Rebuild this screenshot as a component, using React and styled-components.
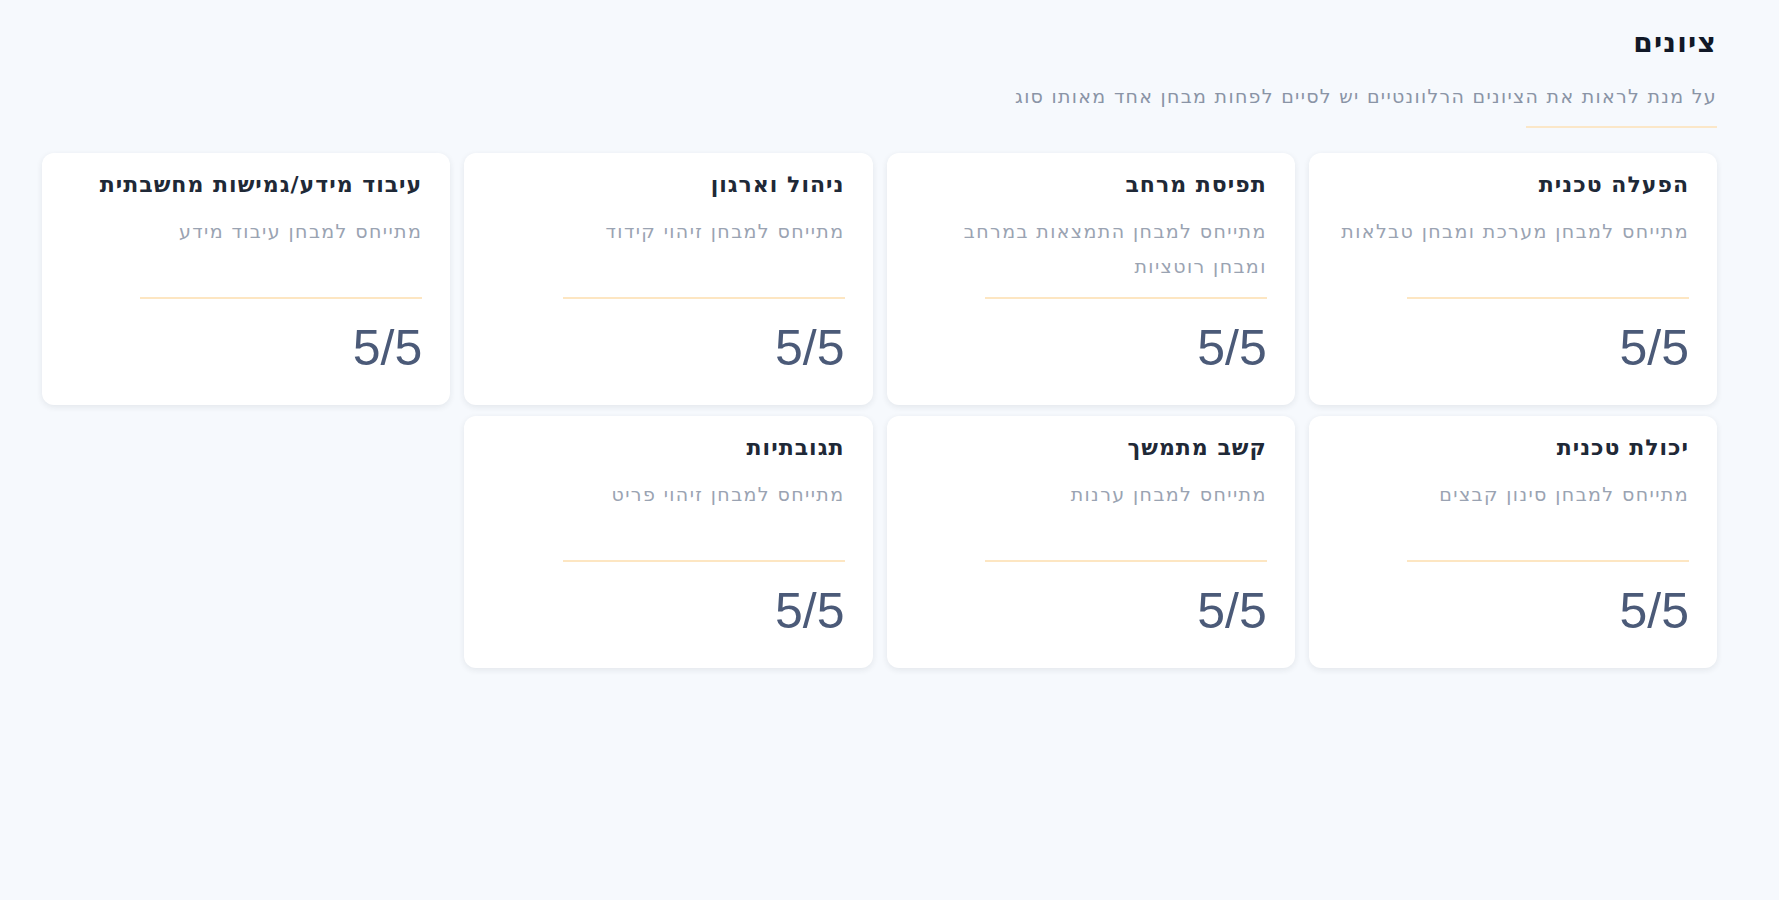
import React from 'react';
import styled, { createGlobalStyle } from 'styled-components';

const GlobalStyle = createGlobalStyle`
  html, body {
    margin: 0;
    padding: 0;
    background: #f6f9fd;
  }
  body {
    font-family: "DejaVu Sans", "Liberation Sans", Arial, sans-serif;
  }
`;

const Page = styled.div`
  direction: rtl;
  min-height: 900px;
  box-sizing: border-box;
  padding: 26px 62px 40px 42px;
  background: #f6f9fd;
`;

const Header = styled.header`
  display: flex;
  flex-direction: column;
  align-items: flex-start;
  margin-bottom: 25px;
`;

const Title = styled.h1`
  margin: 0;
  font-size: 28px;
  line-height: 34px;
  letter-spacing: 1.2px;
  font-weight: 700;
  color: #111827;
`;

const Subtitle = styled.p`
  margin: 23px 0 0;
  font-size: 19px;
  line-height: 26px;
  letter-spacing: 1.3px;
  color: #8a94a6;
`;

const Accent = styled.div`
  width: 191px;
  height: 2px;
  margin-top: 17px;
  background: #fbe7c8;
`;

const Grid = styled.div`
  display: grid;
  grid-template-columns: repeat(4, 1fr);
  gap: 11px 14px;
`;

const Card = styled.div`
  background: #ffffff;
  border-radius: 12px;
  box-shadow: 0 2px 6px rgba(30, 41, 59, 0.09);
  padding: 17px 28px 28px;
  display: flex;
  flex-direction: column;
  align-items: flex-start;
`;

const CardTitle = styled.h3`
  margin: 0;
  font-size: 22px;
  line-height: 30px;
  letter-spacing: 1px;
  font-weight: 700;
  color: #1f2937;
`;

const CardDesc = styled.p`
  margin: 14px 0 0;
  min-height: 70px;
  font-size: 19px;
  line-height: 35px;
  letter-spacing: 1.4px;
  color: #9aa3b2;
`;

const Divider = styled.div`
  width: 80%;
  height: 2px;
  margin-top: 13px;
  background: #fde6c2;
`;

const Score = styled.div`
  margin-top: 20px;
  font-family: "Liberation Sans", Arial, sans-serif;
  font-size: 50px;
  line-height: 58px;
  font-weight: 400;
  color: #4b5a78;
  unicode-bidi: isolate;
  direction: ltr;
`;

const scores = [
  { title: 'הפעלה טכנית', desc: 'מתייחס למבחן מערכת ומבחן טבלאות', score: '5/5' },
  { title: 'תפיסת מרחב', desc: 'מתייחס למבחן התמצאות במרחב ומבחן רוטציות', score: '5/5' },
  { title: 'ניהול וארגון', desc: 'מתייחס למבחן זיהוי קידוד', score: '5/5' },
  { title: 'עיבוד מידע/גמישות מחשבתית', desc: 'מתייחס למבחן עיבוד מידע', score: '5/5' },
  { title: 'יכולת טכנית', desc: 'מתייחס למבחן סינון קבצים', score: '5/5' },
  { title: 'קשב מתמשך', desc: 'מתייחס למבחן ערנות', score: '5/5' },
  { title: 'תגובתיות', desc: 'מתייחס למבחן זיהוי פריט', score: '5/5' },
];

const ScoreCard = ({ title, desc, score }) => (
  <Card>
    <CardTitle>{title}</CardTitle>
    <CardDesc>{desc}</CardDesc>
    <Divider />
    <Score>{score}</Score>
  </Card>
);

export default function App() {
  return (
    <>
      <GlobalStyle />
      <Page>
        <Header>
          <Title>ציונים</Title>
          <Subtitle>
            על מנת לראות את הציונים הרלוונטיים יש לסיים לפחות מבחן אחד מאותו סוג
          </Subtitle>
          <Accent />
        </Header>
        <Grid>
          {scores.map((item) => (
            <ScoreCard key={item.title} {...item} />
          ))}
        </Grid>
      </Page>
    </>
  );
}
